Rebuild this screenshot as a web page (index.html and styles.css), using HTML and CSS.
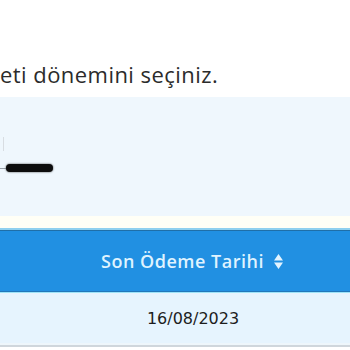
FILE: index.html
```html
<!DOCTYPE html>
<html lang="tr">
<head>
<meta charset="utf-8">
<link rel="stylesheet" href="styles.css">
</head>
<body>
<div class="intro">
  <p class="intro-text">eti dönemini seçiniz.</p>
</div>
<div class="panel">
  <div class="field-edge"></div>
  <div class="field-row">
    <span class="dash"></span>
    <span class="redact"></span>
  </div>
</div>
<div class="spacer"></div>
<div class="table">
  <div class="thead">
    <div class="th-blank"></div>
    <div class="th">Son Ödeme Tarihi
      <svg class="sort" width="9" height="15" viewBox="0 0 9 15"><path d="M4.5 0 L9 6.5 H0 Z M0 8.5 H9 L4.5 15 Z" fill="#e3f4ff"/></svg>
    </div>
  </div>
  <div class="trow">
    <div class="td-blank"></div>
    <div class="td">16/08/2023</div>
  </div>
</div>
</body>
</html>
```
FILE: styles.css
```css
html, body {
  margin: 0;
  padding: 0;
  background: #ffffff;
}
body {
  width: 350px;
  height: 350px;
  overflow: hidden;
  font-family: "Open Sans", "DejaVu Sans", sans-serif;
}
.intro {
  height: 97px;
  display: flex;
  align-items: flex-end;
}
.intro-text {
  margin: 0 0 9px 0;
  font-size: 22px;
  line-height: 28px;
  color: #2b2b2b;
  letter-spacing: 0.45px;
}
.panel {
  height: 119px;
  background: #eff7fd;
  display: flex;
  flex-direction: column;
  padding-top: 40px;
  box-sizing: border-box;
}
.field-edge {
  width: 3px;
  height: 14px;
  border-right: 1px solid #d8dde2;
  margin-bottom: 12px;
}
.field-row {
  display: flex;
  align-items: center;
  height: 10px;
}
.dash {
  width: 6px;
  height: 1px;
  background: #9aa2aa;
}
.redact {
  width: 47px;
  height: 8px;
  border-radius: 4px;
  background: #0d0d0d;
  box-shadow: 0 0 2px #333;
}
.spacer {
  height: 12px;
  background: #fffff6;
}
.table {
  display: flex;
  flex-direction: column;
}
.thead {
  display: flex;
  height: 62px;
  background: #2190e2;
  border-top: 2px solid #8fd0ef;
  box-shadow: inset 0 1px 0 #1f6fa8, inset 0 -1px 0 #2277b9;
  border-bottom: 1px solid #9ee3f8;
}
.th-blank, .td-blank {
  width: 34px;
  flex: none;
}
.th {
  flex: 1;
  display: flex;
  align-items: center;
  justify-content: center;
  gap: 10px;
  color: #dff3ff;
  font-size: 18px;
  font-weight: 600;
  letter-spacing: 0.5px;
}
.sort {
  display: block;
}
.trow {
  display: flex;
  height: 50px;
  background: #e6f4fe;
  border-bottom: 2px solid #eef6fb;
  box-shadow: 0 2px 0 #cfd6dc;
}
.td-blank {
  width: 36px;
}
.td {
  flex: 1;
  display: flex;
  align-items: center;
  justify-content: center;
  font-family: "DejaVu Sans", sans-serif;
  font-size: 16px;
  color: #1d1d1d;
}
```
